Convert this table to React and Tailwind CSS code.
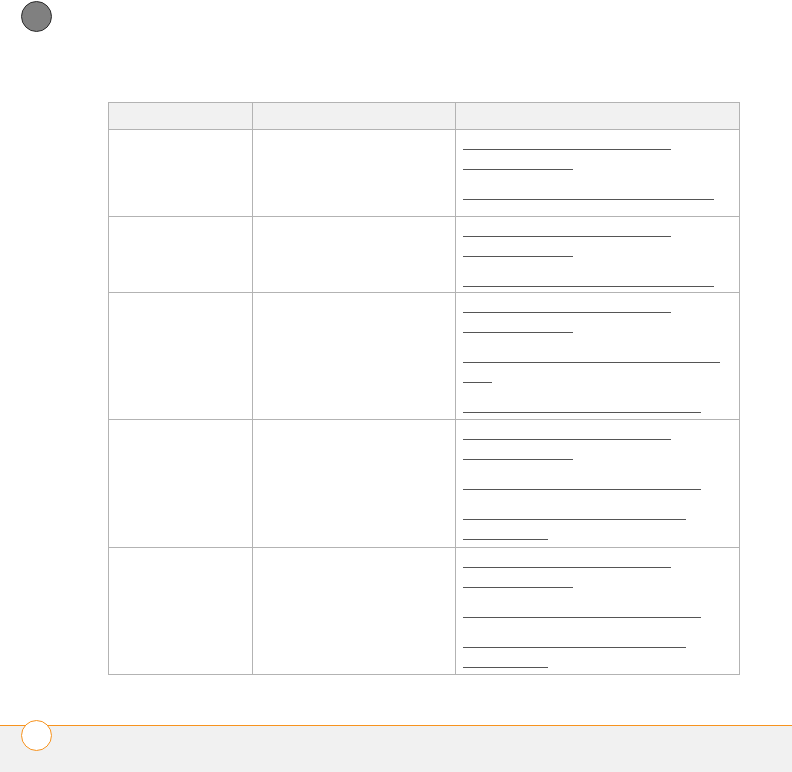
import React from "react";

// widths of underlined link runs in the third column, grouped by paragraph
const rows = [
  { h: "h-[87px]", paras: [[208, 110], [251]] },
  { h: "h-[76px]", paras: [[208, 110], [251]] },
  { h: "h-[127px]", paras: [[208, 110], [257, 29], [238]] },
  { h: "h-[128px]", paras: [[208, 110], [238], [223, 85]] },
  { h: "h-[127px]", paras: [[208, 110], [238], [223, 85]] },
];

const LinkLines = ({ paras }) => (
  <div className="flex flex-col gap-[10px] pl-[7px]">
    {paras.map((lines, i) => (
      <div key={i} className="flex flex-col">
        {lines.map((w, j) => (
          <div key={j} className="h-[20px] border-b border-[#555555]" style={{ width: w }} />
        ))}
      </div>
    ))}
  </div>
);

const App = () => {
  return (
    <div className="w-[792px] h-[772px] bg-white flex flex-col font-['Liberation_Sans',sans-serif] overflow-hidden">
      {/* page marker */}
      <div className="ml-[21px] mt-[1px] w-[31px] h-[31px] rounded-full bg-[#808080] border border-[#2b2b2b]" />

      {/* Table */}
      <div className="ml-[108px] mt-[70px] w-[632px] border-t border-l border-[#b3b3b3]">
        <div className="flex h-[27px] bg-[#f1f1f1]">
          <div className="w-[144px] border-r border-b border-[#b3b3b3]" />
          <div className="w-[203px] border-r border-b border-[#b3b3b3]" />
          <div className="w-[284px] border-r border-b border-[#b3b3b3]" />
        </div>
        {rows.map((row, idx) => (
          <div key={idx} className={`flex ${row.h}`}>
            <div className="w-[144px] border-r border-b border-[#b3b3b3]" />
            <div className="w-[203px] border-r border-b border-[#b3b3b3]" />
            <div className="w-[284px] border-r border-b border-[#b3b3b3]">
              <LinkLines paras={row.paras} />
            </div>
          </div>
        ))}
      </div>

      {/* Footer */}
      <div className="mt-auto h-[47px] relative border-t border-[#f7931e] bg-[#f1f1f1]">
        <div className="absolute left-[21px] top-[-6px] w-[31px] h-[31px] rounded-full bg-white border border-[#f7931e]" />
      </div>
    </div>
  );
};

export default App;
